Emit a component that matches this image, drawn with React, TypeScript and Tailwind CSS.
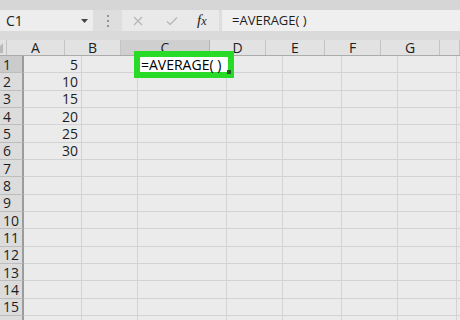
import React from 'react';

const cols = [
  { key: 'A', w: 'w-[58px]' },
  { key: 'B', w: 'w-[56px]' },
  { key: 'C', w: 'w-[89px]' },
  { key: 'D', w: 'w-[56px]' },
  { key: 'E', w: 'w-[59px]' },
  { key: 'F', w: 'w-[56px]' },
  { key: 'G', w: 'w-[59px]' },
  { key: '', w: 'w-[20px]' },
];

const values: Record<number, string> = { 1: '5', 2: '10', 3: '15', 4: '20', 5: '25', 6: '30' };

const rows = Array.from({ length: 16 }, (_, i) => i + 1);

const App: React.FC = () => {
  return (
    <div className="w-[460px] h-[320px] overflow-hidden bg-[#dedede] text-[#1e1e1e] font-['Open_Sans','Noto_Sans',sans-serif]">
      {/* Ribbon edge */}
      <div className="h-[10px] bg-[#d6d6d6]" />

      {/* Formula bar */}
      <div className="h-[21px] flex items-stretch bg-[#dedede]">
        <div className="w-[93px] bg-[#ededed] flex items-center justify-between pl-[6px] pr-[5px] text-[14px]">
          <span>C1</span>
          <svg width="7" height="4" viewBox="0 0 7 4"><path d="M0 0h7L3.5 4z" fill="#444" /></svg>
        </div>
        <div className="w-[29px] flex flex-col items-center justify-center gap-[3px]">
          <span className="w-[2px] h-[2px] rounded-full bg-[#7a7a7a]" />
          <span className="w-[2px] h-[2px] rounded-full bg-[#7a7a7a]" />
          <span className="w-[2px] h-[2px] rounded-full bg-[#7a7a7a]" />
        </div>
        <div className="w-[97px] bg-[#e9e9e9] flex items-center pl-[10px]">
          <svg width="10" height="10" viewBox="0 0 10 10" className="ml-[1px]">
            <path d="M1 1l8 8M9 1l-8 8" stroke="#b4b4b4" strokeWidth="1.1" />
          </svg>
          <svg width="12" height="10" viewBox="0 0 12 10" className="ml-[23px]">
            <path d="M1 5.5l3.2 3L11 1.5" stroke="#b4b4b4" strokeWidth="1.2" fill="none" />
          </svg>
          <span className="ml-[19px] text-[15px] italic font-['Liberation_Serif',serif] text-[#222] leading-none">
            f<span className="text-[12px]">x</span>
          </span>
        </div>
        <div className="w-[3px]" />
        <div className="flex-1 bg-[#efefef] flex items-center pl-[10px] text-[13px]">=AVERAGE( )</div>
      </div>

      <div className="h-[9px] bg-[#dadada]" />

      {/* Sheet */}
      <div className="relative bg-[#ebebeb]">
        {/* Column headers */}
        <div className="flex h-[16px] bg-[#e2e2e2] border-b border-[#ababab]">
          <div className="w-[24px] relative border-r border-[#c4c4c4]">
            <svg width="10" height="10" viewBox="0 0 10 10" className="absolute right-[3px] bottom-[2px]">
              <path d="M10 0v10H0z" fill="#b9b9b9" />
            </svg>
          </div>
          {cols.map((c, i) => (
            <div
              key={i}
              className={`${c.w} shrink-0 flex items-center justify-center text-[14px] border-r ${
                c.key === 'C' ? 'bg-[#cfcfcf] border-[#b5b5b5]' : 'border-[#c4c4c4]'
              }`}
            >
              {c.key}
            </div>
          ))}
        </div>

        {/* Rows */}
        {rows.map((r) => (
          <div key={r} className="flex h-[17.33px]">
            <div
              className={`w-[24px] shrink-0 flex items-center pl-[3px] text-[14px] border-r-2 border-[#9b9b9b] border-b border-b-[#bdbdbd] ${
                r === 1 ? 'bg-[#cbcbcb]' : 'bg-[#dcdcdc]'
              }`}
            >
              {r}
            </div>
            {cols.map((c, i) => (
              <div
                key={i}
                className={`${c.w} shrink-0 border-r border-b border-[#d3d3d3] flex items-center justify-end pr-[3px] text-[14px]`}
              >
                {c.key === 'A' ? values[r] : ''}
              </div>
            ))}
          </div>
        ))}

        {/* Active cell */}
        <div className="absolute left-[134px] top-[11px] w-[100px] h-[27px] border-[6px] border-[#27db27] bg-white">
          <div className="h-full flex items-center pl-[1px] text-[14px] text-black leading-none">=AVERAGE( )</div>
          <div className="absolute right-[-3px] bottom-[-2px] w-[4px] h-[4px] bg-[#1f5f1f]" />
        </div>
      </div>
    </div>
  );
};

export default App;
